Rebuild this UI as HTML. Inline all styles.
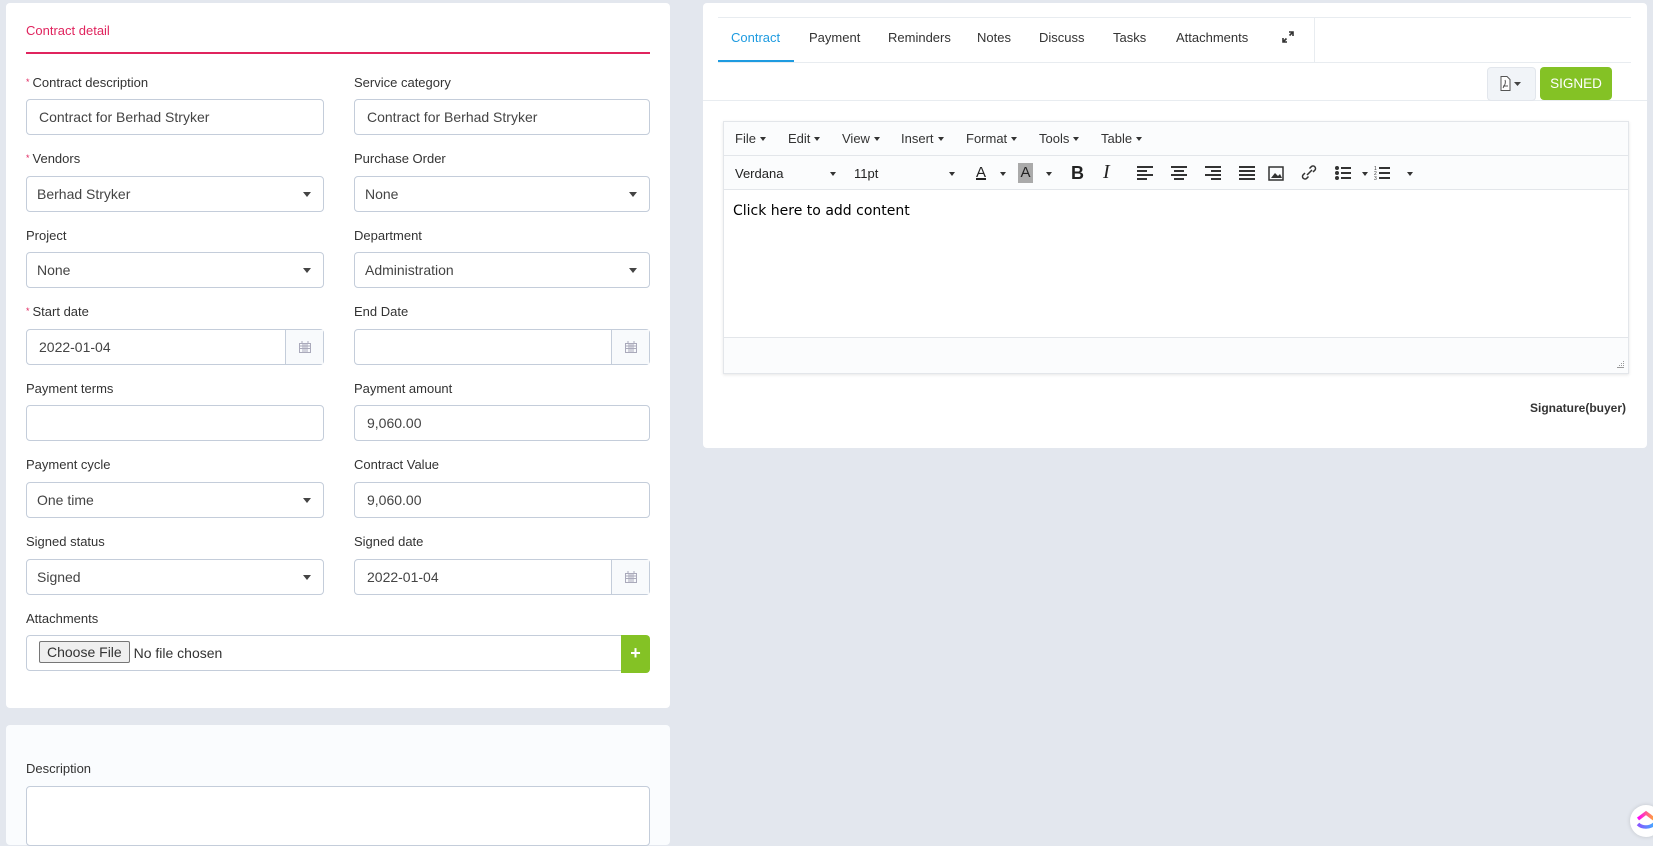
<!DOCTYPE html>
<html><head><meta charset="utf-8"><style>
*{box-sizing:border-box;margin:0;padding:0}
body{width:1653px;height:833px;background:#e3e7ee;font-family:"Liberation Sans",Arial,sans-serif;font-size:13px;color:#333;position:relative;overflow:hidden}
.a{position:absolute}
.card{position:absolute;background:#fff;border-radius:4px}
.lbl{position:absolute;font-size:13px;color:#333}
.lbl i{color:#e0245e;font-style:normal;font-size:9px;margin-right:3px;vertical-align:2px}
.inp{position:absolute;height:36px;border:1px solid #c4cdda;border-radius:4px;background:#fff;font-size:14px;color:#444;line-height:34px;padding-left:12px}
.sel{padding-left:10px}
.sel:after{content:"";position:absolute;right:12px;top:15px;border-left:4px solid transparent;border-right:4px solid transparent;border-top:5px solid #444}
.cal{position:absolute;right:0;top:0;width:38px;height:34px;border-left:1px solid #c4cdda;background:#f8fafc}
.tab{position:absolute;top:30px;font-size:13px;color:#333}
.mi{position:absolute;top:131px;font-size:13px;color:#333}
.mi:after,.cr:after{content:"";display:inline-block;margin-left:4px;vertical-align:2px;border-left:3.5px solid transparent;border-right:3.5px solid transparent;border-top:4px solid #333}
.cr{position:absolute;top:166px}
.tb{position:absolute;top:166px;font-size:13px;color:#222}
</style></head><body>
<div class="card" style="left:6px;top:3px;width:664px;height:705px"></div>
<div class="a" style="left:26px;top:23px;color:#e0245e;font-size:13px">Contract detail</div>
<div class="a" style="left:26px;top:52px;width:624px;height:2px;background:#e0245e"></div>

<div class="lbl" style="left:26px;top:75px"><i>*</i>Contract description</div>
<div class="lbl" style="left:354px;top:75px">Service category</div>
<div class="inp" style="left:26px;top:99px;width:298px">Contract for Berhad Stryker</div>
<div class="inp" style="left:354px;top:99px;width:296px">Contract for Berhad Stryker</div>

<div class="lbl" style="left:26px;top:151px"><i>*</i>Vendors</div>
<div class="lbl" style="left:354px;top:151px">Purchase Order</div>
<div class="inp sel" style="left:26px;top:176px;width:298px">Berhad Stryker</div>
<div class="inp sel" style="left:354px;top:176px;width:296px">None</div>

<div class="lbl" style="left:26px;top:228px">Project</div>
<div class="lbl" style="left:354px;top:228px">Department</div>
<div class="inp sel" style="left:26px;top:252px;width:298px">None</div>
<div class="inp sel" style="left:354px;top:252px;width:296px">Administration</div>

<div class="lbl" style="left:26px;top:304px"><i>*</i>Start date</div>
<div class="lbl" style="left:354px;top:304px">End Date</div>
<div class="inp" style="left:26px;top:329px;width:298px">2022-01-04<div class="cal"><svg class="a" style="left:13px;top:11px" width="12" height="12"><rect x="0.5" y="2.5" width="11" height="9" fill="none" stroke="#aab" /><path d="M1 5h10M1 7.5h10M4 3v8M6 3v8M8 3v8M3 0v3M9 0v3" stroke="#aab"/></svg></div></div>
<div class="inp" style="left:354px;top:329px;width:296px"><div class="cal"><svg class="a" style="left:13px;top:11px" width="12" height="12"><rect x="0.5" y="2.5" width="11" height="9" fill="none" stroke="#aab" /><path d="M1 5h10M1 7.5h10M4 3v8M6 3v8M8 3v8M3 0v3M9 0v3" stroke="#aab"/></svg></div></div>

<div class="lbl" style="left:26px;top:381px">Payment terms</div>
<div class="lbl" style="left:354px;top:381px">Payment amount</div>
<div class="inp" style="left:26px;top:405px;width:298px"></div>
<div class="inp" style="left:354px;top:405px;width:296px">9,060.00</div>

<div class="lbl" style="left:26px;top:457px">Payment cycle</div>
<div class="lbl" style="left:354px;top:457px">Contract Value</div>
<div class="inp sel" style="left:26px;top:482px;width:298px">One time</div>
<div class="inp" style="left:354px;top:482px;width:296px">9,060.00</div>

<div class="lbl" style="left:26px;top:534px">Signed status</div>
<div class="lbl" style="left:354px;top:534px">Signed date</div>
<div class="inp sel" style="left:26px;top:559px;width:298px">Signed</div>
<div class="inp" style="left:354px;top:559px;width:296px">2022-01-04<div class="cal"><svg class="a" style="left:13px;top:11px" width="12" height="12"><rect x="0.5" y="2.5" width="11" height="9" fill="none" stroke="#aab" /><path d="M1 5h10M1 7.5h10M4 3v8M6 3v8M8 3v8M3 0v3M9 0v3" stroke="#aab"/></svg></div></div>

<div class="lbl" style="left:26px;top:611px">Attachments</div>
<div class="inp" style="left:26px;top:635px;width:600px;padding-left:12px;color:#333"><span style="display:inline-block;height:22px;line-height:20px;border:1px solid #767676;border-radius:2px;background:#efefef;padding:0 7px;font-size:14px;vertical-align:1px">Choose File</span> No file chosen</div>
<div class="a" style="left:621px;top:635px;width:29px;height:38px;background:#84c225;border-radius:0 4px 4px 0;color:#fff;font-weight:bold;font-size:18px;text-align:center;line-height:36px">+</div>

<div class="card" style="left:6px;top:725px;width:664px;height:120px;background:#fafcfe"></div>
<div class="lbl" style="left:26px;top:761px">Description</div>
<div class="inp" style="left:26px;top:786px;width:624px;height:60px"></div>

<!-- right card -->
<div class="card" style="left:703px;top:3px;width:944px;height:445px"></div>
<div class="a" style="left:718px;top:17px;width:913px;height:1px;background:#e8ecf0"></div>
<div class="a" style="left:718px;top:62px;width:913px;height:1px;background:#e8ecf0"></div>
<div class="a" style="left:1314px;top:17px;width:1px;height:45px;background:#e8ecf0"></div>
<div class="a" style="left:718px;top:60px;width:76px;height:2px;background:#1e9be0"></div>
<div class="tab" style="left:731px;color:#1e9be0">Contract</div>
<div class="tab" style="left:809px">Payment</div>
<div class="tab" style="left:888px">Reminders</div>
<div class="tab" style="left:977px">Notes</div>
<div class="tab" style="left:1039px">Discuss</div>
<div class="tab" style="left:1113px">Tasks</div>
<div class="tab" style="left:1176px">Attachments</div>
<svg class="a" style="left:1282px;top:31px" width="12" height="12"><path d="M7 1h4v4M11 1L7.5 4.5M5 11H1V7M1 11l3.5-3.5" stroke="#333" stroke-width="1.6" fill="none"/></svg>
<div class="a" style="left:703px;top:100px;width:944px;height:1px;background:#e8ecf0"></div>
<div class="a" style="left:1487px;top:67px;width:49px;height:34px;background:#f1f4f8;border:1px solid #e2e6ec;border-radius:4px"></div>
<svg class="a" style="left:1500px;top:76px" width="24" height="16"><path d="M1 .5h6l3 3v11H1z" fill="#fff" stroke="#555"/><path d="M3 12c2-3 3-6 2-8M3 10h5" stroke="#555" fill="none"/><path d="M14 6h7l-3.5 4z" fill="#444"/></svg>
<div class="a" style="left:1540px;top:67px;width:72px;height:33px;background:#84c225;border-radius:4px;color:#fff;font-size:13.5px;text-align:center;line-height:33px">SIGNED</div>

<div class="a" style="left:723px;top:121px;width:906px;height:253px;border:1px solid #e3e6ea;background:#fff;box-shadow:0 1px 3px rgba(0,0,0,.1)"></div>
<div class="a" style="left:724px;top:122px;width:904px;height:34px;background:#fbfcfd;border-bottom:1px solid #e3e6ea"></div>
<div class="a" style="left:724px;top:156px;width:904px;height:34px;background:#fbfcfd;border-bottom:1px solid #e3e6ea"></div>
<div class="a" style="left:724px;top:337px;width:904px;height:36px;background:#fbfcfd;border-top:1px solid #e3e6ea"></div>
<div class="mi" style="left:735px">File</div>
<div class="mi" style="left:788px">Edit</div>
<div class="mi" style="left:842px">View</div>
<div class="mi" style="left:901px">Insert</div>
<div class="mi" style="left:966px">Format</div>
<div class="mi" style="left:1039px">Tools</div>
<div class="mi" style="left:1101px">Table</div>
<div class="tb" style="left:735px">Verdana</div><div class="cr" style="left:826px"></div>
<div class="tb" style="left:854px">11pt</div><div class="cr" style="left:945px"></div>
<div class="tb" style="left:976px;top:164px;text-decoration:underline;text-decoration-thickness:2px;color:#222;font-size:15px">A</div><div class="cr" style="left:996px"></div>
<div class="a" style="left:1018px;top:163px;width:15px;height:20px;background:#aaa;color:#222;font-size:15px;text-align:center;line-height:20px">A</div><div class="cr" style="left:1042px"></div>
<div class="tb" style="left:1071px;font-weight:bold;font-size:18px;top:163px">B</div>
<div class="tb" style="left:1103px;font-style:italic;font-size:20px;top:161px;font-family:'Liberation Serif',serif">I</div>
<svg class="a" style="left:1137px;top:166px" width="120" height="14"><g stroke="#333" stroke-width="2"><path d="M0 1h16M0 5h10M0 9h16M0 13h10"/><path d="M34 1h16M37 5h10M34 9h16M37 13h10"/><path d="M68 1h16M74 5h10M68 9h16M74 13h10"/><path d="M102 1h16M102 5h16M102 9h16M102 13h16"/></g></svg>
<svg class="a" style="left:1268px;top:166px" width="16" height="15"><rect x="1" y="1" width="14" height="13" fill="none" stroke="#333" stroke-width="1.5"/><path d="M3 12l4-5 3 3 2-2 2 4z" fill="#333"/></svg>
<svg class="a" style="left:1301px;top:164px" width="16" height="17"><path d="M6 11l5-5M4 9l-2 2a2.5 2.5 0 003.5 3.5l2-2M12 8l2-2a2.5 2.5 0 00-3.5-3.5l-2 2" stroke="#333" stroke-width="1.5" fill="none"/></svg>
<svg class="a" style="left:1335px;top:166px" width="16" height="14"><g fill="#333"><circle cx="2" cy="2" r="2"/><circle cx="2" cy="7" r="2"/><circle cx="2" cy="12" r="2"/></g><path d="M6 2h10M6 7h10M6 12h10" stroke="#333" stroke-width="2"/></svg><div class="cr" style="left:1358px"></div>
<svg class="a" style="left:1374px;top:165px" width="16" height="16"><text x="0" y="5" font-size="5" fill="#333">1</text><text x="0" y="10" font-size="5" fill="#333">2</text><text x="0" y="15" font-size="5" fill="#333">3</text><path d="M5 3h11M5 8h11M5 13h11" stroke="#333" stroke-width="2"/></svg><div class="cr" style="left:1403px"></div>
<div class="a" style="left:733px;top:203px;font-family:'DejaVu Sans',Verdana,sans-serif;font-size:14px;color:#000">Click here to add content</div>
<svg class="a" style="left:1616px;top:360px" width="10" height="10"><g fill="#999"><rect x="7" y="1" width="1" height="1"/><rect x="5" y="3" width="1" height="1"/><rect x="7" y="3" width="1" height="1"/><rect x="3" y="5" width="1" height="1"/><rect x="5" y="5" width="1" height="1"/><rect x="7" y="5" width="1" height="1"/><rect x="1" y="7" width="7" height="1"/></g></svg>
<div class="a" style="right:27px;top:401px;font-weight:bold;font-size:12px;color:#333">Signature(buyer)</div>

<div class="a" style="left:1630px;top:805px;width:32px;height:32px;border-radius:50%;background:#fff;box-shadow:0 0 4px rgba(0,0,0,.15)"></div>
<svg class="a" style="left:1636px;top:810px" width="20" height="20"><defs><linearGradient id="g1" x1="0" x2="1"><stop offset="0" stop-color="#f0f"/><stop offset="1" stop-color="#fa3"/></linearGradient><linearGradient id="g2" x1="0" x2="1"><stop offset="0" stop-color="#85f"/><stop offset="1" stop-color="#4af"/></linearGradient></defs><path d="M2 9l8-6 8 6" stroke="url(#g1)" stroke-width="3.5" fill="none"/><path d="M2 14c4 4 12 4 16 0" stroke="url(#g2)" stroke-width="3.5" fill="none"/></svg>
</body></html>
